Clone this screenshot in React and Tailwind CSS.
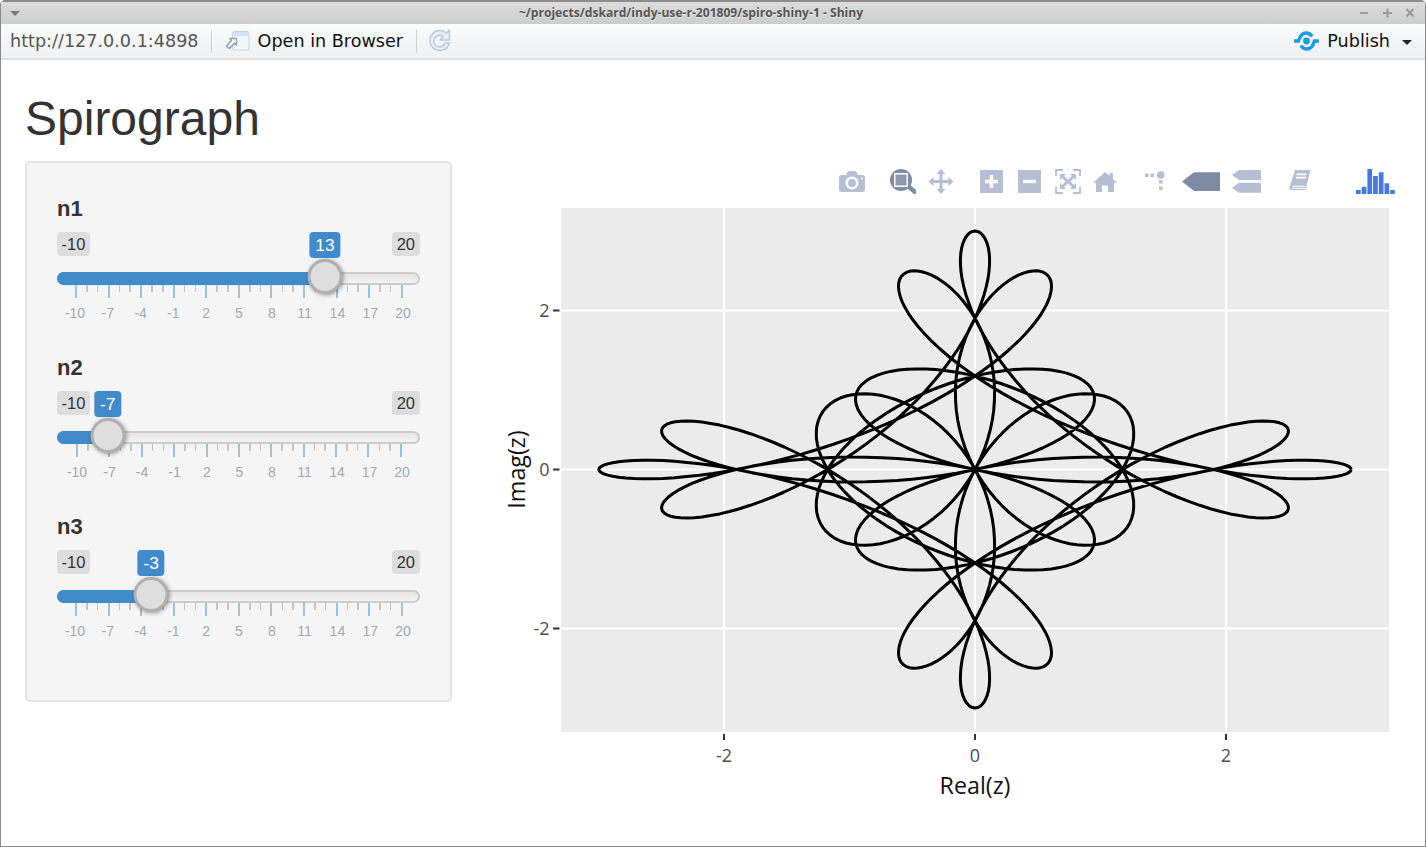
import React from 'react';

const UI = '"DejaVu Sans", sans-serif';

// z(t) = e^(i n1 t) + e^(i n2 t) + e^(i n3 t)
const spiroPath = () => {
    const pts = [];
    const N = 1000;
    for (let i = 0; i <= N; i++) {
        const t = (i / N) * 2 * Math.PI;
        const re = Math.cos(13 * t) + Math.cos(-7 * t) + Math.cos(-3 * t);
        const im = Math.sin(13 * t) + Math.sin(-7 * t) + Math.sin(-3 * t);
        pts.push(`${(975 + re * 125.4).toFixed(1)},${(469.5 - im * 79.5).toFixed(1)}`);
    }
    return 'M' + pts.join('L');
};

const tickLabels = ['-10', '-7', '-4', '-1', '2', '5', '8', '11', '14', '17', '20'];

const SliderInput = ({ label, value, tickLeft = 18, tickRight = 17, labelShift = 0 }) => {
    const p = (value + 10) / 30;
    const center = 18 + 326 * p;
    const ticks = Array.from({ length: 31 }, (_, i) => i);

    return (
        <div className="h-[159px]">
            <div className="h-[24px] pt-[1px] text-[22px] leading-[24px] font-bold text-[#333]">{label}</div>
            <div className="relative mt-[12px] w-[363px]">
                <div className="flex justify-between text-[16.5px] leading-[25px] text-[#333]">
                    <span className="h-[24px] rounded-[4px] bg-[#dddddd] px-[4.5px]">-10</span>
                    <span className="h-[24px] rounded-[4px] bg-[#dddddd] px-[5px]">20</span>
                </div>
                <div className="relative mt-[16px] h-[13px] rounded-full border-2 border-[#cccccc] bg-gradient-to-b from-[#e4e4e4] to-[#f4f4f4]" />
                <div
                    className="absolute left-0 top-[40px] h-[13px] rounded-l-full bg-[#428bca]"
                    style={{ width: center }}
                />
                <span
                    className="absolute top-0 h-[26px] -translate-x-1/2 rounded-[4px] bg-[#428bca] px-[6px] text-[17.3px] leading-[26px] text-white"
                    style={{ left: center }}
                >
                    {value}
                </span>
                <div
                    className="absolute top-[27px] h-[35px] w-[35px] -translate-x-1/2 rounded-full border-[3px] border-[#b0b0b0] bg-[#dedede] shadow-[1px_1px_4px_rgba(0,0,0,0.4)]"
                    style={{ left: center }}
                />
                <div className="flex justify-between" style={{ marginLeft: tickLeft, marginRight: tickRight }}>
                    {ticks.map((i) => (
                        <span
                            key={i}
                            className={i % 3 === 0 ? 'h-[13px] w-[2px] bg-[#9cc0df]' : 'h-[7px] w-[1.5px] bg-[#c4c4c4]'}
                        />
                    ))}
                </div>
                <div
                    className="mt-[7px] flex justify-between text-[14px] leading-[16px] text-[#a0a8b0]"
                    style={{ marginLeft: tickLeft + labelShift, marginRight: tickRight }}
                >
                    {tickLabels.map((t) => (
                        <span key={t} className="flex w-0 justify-center">{t}</span>
                    ))}
                </div>
            </div>
        </div>
    );
};

const BrowserIcon = () => (
    <svg width="26" height="22" viewBox="0 0 26 22" className="block">
        <rect x="8.5" y="1.5" width="16.500" height="18.500" rx="2" fill="#f1f6fb" stroke="#c4d3e4" />
        <rect x="9" y="2" width="15.500" height="4" rx="1.500" fill="#d3e3f3" />
        <path
            d="M6 8.500h6.500V15l-2-2-5 5.500-3-2.500 5-5.500z"
            fill="#fff"
            stroke="#8f9ba8"
            strokeWidth="1.400"
            strokeLinejoin="round"
        />
    </svg>
);

const RefreshIcon = () => (
    <svg width="24" height="24" viewBox="0 0 24 24" className="block">
        <path
            d="M21.500 14a10 10 0 1 1-3-10L21.500 1v10h-9.500l3.300-3.400a5.800 5.800 0 1 0 1.900 6.400z"
            fill="#e6eef7"
            stroke="#b8c9dc"
            strokeWidth="1.400"
            strokeLinejoin="round"
        />
    </svg>
);

const PublishIcon = () => (
    <svg width="27" height="22" viewBox="0 0 27 22" className="block">
        <path d="M1 11h4.500C7 6 10 3 13 3c3 0 5 1.500 6 3.500" fill="none" stroke="#1a9be6" strokeWidth="3.400" />
        <path d="M26 11h-4.500C20 16 17 19 14 19c-3 0-5-1.500-6-3.500" fill="none" stroke="#1a9be6" strokeWidth="3.400" />
        <circle cx="13.500" cy="11" r="3.400" fill="#1a9be6" />
    </svg>
);

const idle = '#b5bed3';
const active = '#7f8ba5';

// plotly modebar
const ModeIcon = ({ w, ml, children }) => (
    <svg width={w} height="25" viewBox={`0 0 ${w} 25`} className="block shrink-0" style={{ marginLeft: ml }}>
        {children}
    </svg>
);

const Modebar = () => (
    <div className="flex h-[25px] w-[895px] justify-end">
        <ModeIcon w={26} ml={0}>
            <path
                d="M3 6h4l2-3.500a1 1 0 0 1 1-.5h6a1 1 0 0 1 1 .5L19 6h4a3 3 0 0 1 3 3v11a3 3 0 0 1-3 3H3a3 3 0 0 1-3-3V9a3 3 0 0 1 3-3z"
                fill={idle}
            />
            <circle cx="13" cy="14" r="6.500" fill="#fff" />
            <circle cx="13" cy="14" r="4" fill={idle} />
            <circle cx="23" cy="9.500" r="1" fill="#fff" />
        </ModeIcon>
        <ModeIcon w={26} ml={25}>
            <path d="M18 17l7 6" stroke={active} strokeWidth="4.500" strokeLinecap="round" />
            <circle cx="11" cy="11" r="11" fill={active} />
            <rect x="4" y="4" width="14" height="14" rx="1" fill="#fff" />
            <rect x="5.500" y="5.500" width="11" height="11" fill="#8e99b0" />
        </ModeIcon>
        <ModeIcon w={26} ml={12}>
            <path
                d="M13 0l4.500 5h-3v6h6V8l5 4.500-5 4.500v-3h-6v6h3L13 25l-4.500-5h3v-6h-6v3l-5-4.500 5-4.500v3h6V5h-3z"
                fill={idle}
            />
        </ModeIcon>
        <ModeIcon w={23} ml={26}>
            <rect x="0" y="1" width="23" height="23" fill={idle} />
            <path d="M9.800 6h3.400v4.800H18v3.400h-4.800V19H9.800v-4.800H5v-3.400h4.800z" fill="#fff" />
        </ModeIcon>
        <ModeIcon w={23} ml={15}>
            <rect x="0" y="1" width="23" height="23" fill={idle} />
            <rect x="5" y="10.800" width="13" height="3.400" fill="#fff" />
        </ModeIcon>
        <ModeIcon w={26} ml={14}>
            <path d="M1 7V1h7M18 1h7v6M25 18v6h-7M8 24H1v-6" fill="none" stroke={idle} strokeWidth="1.800" />
            <path
                d="M5 5h6L9 7l4 3.500L17 7l-2-2h6v6l-2-2-3.500 3.500L19 16l2-2v6h-6l2-2-4-3.500L9 18l2 2H5v-6l2 2 3.500-3.500L7 9l-2 2z"
                fill={idle}
            />
        </ModeIcon>
        <ModeIcon w={24} ml={12}>
            <path
                d="M12 3l4.500 3.800V4H20v6.200l4 3.500h-3V23h-6v-6.500H9V23H3v-9.300H0z"
                fill={idle}
            />
        </ModeIcon>
        <ModeIcon w={20} ml={28}>
            <rect x="0" y="4.500" width="3.500" height="3.500" fill={idle} />
            <rect x="5.500" y="4.500" width="3.500" height="3.500" fill={idle} />
            <circle cx="15.700" cy="6" r="3.800" fill={idle} />
            <rect x="14" y="11" width="3.500" height="3.500" fill={idle} />
            <rect x="14" y="17.500" width="3.500" height="3.500" fill={idle} />
        </ModeIcon>
        <ModeIcon w={38} ml={17}>
            <path d="M0 12.500L12 3.300h26V22H12z" fill={active} />
        </ModeIcon>
        <ModeIcon w={29} ml={12}>
            <path d="M0 6l7-5h22v10H7zM0 19l7-5.300h22v10H7z" fill={idle} />
        </ModeIcon>
        <ModeIcon w={22} ml={28}>
            <path d="M6 1h15.500L17 19a2 2 0 0 1-2 2H2.500A2 2 0 0 1 .5 18.500z" fill={idle} />
            <path d="M3.500 17.200h13M3 19.300h13" stroke="#fff" strokeWidth="1" />
            <rect x="7.500" y="4.500" width="10" height="1.700" fill="#fff" />
            <rect x="6.800" y="7.800" width="10" height="1.700" fill="#fff" />
        </ModeIcon>
        <ModeIcon w={39} ml={45}>
            {[[0, 21], [5.700, 17.700], [11.400, 0], [17.100, 7], [22.800, 3.300], [28.500, 14.300], [34.200, 21]].map(([x, y]) => (
                <rect key={x} x={x} y={y} width="4.700" height={25 - y} fill="#447adb" />
            ))}
        </ModeIcon>
    </div>
);

const PlotTicks = () => (
    <g fontFamily='"Open Sans", sans-serif' fontSize="18" fill="#4d4d4d">
        {[[-2, 724], [0, 975], [2, 1226]].map(([v, x]) => (
            <g key={v}>
                <rect x={x - 1} y="734" width="2" height="6" fill="#333" />
                <text x={x} y="762" textAnchor="middle">{v}</text>
            </g>
        ))}
        {[[2, 310.500], [0, 469.500], [-2, 628.500]].map(([v, y]) => (
            <g key={v}>
                <rect x="553" y={y - 1} width="6.500" height="2" fill="#333" />
                <text x="549.500" y={y + 6.500} textAnchor="end">{v}</text>
            </g>
        ))}
    </g>
);

const Plot = () => (
    <svg width="900" height="600" viewBox="500 208 900 600" className="mt-[14px] block">
        <rect x="561" y="208" width="828" height="524" fill="#ebebeb" />
        {[724, 975, 1226].map((x) => (
            <line key={x} x1={x} x2={x} y1="208" y2="732" stroke="#fff" strokeWidth="2" />
        ))}
        {[310.500, 469.500, 628.500].map((y) => (
            <line key={y} x1="561" x2="1389" y1={y} y2={y} stroke="#fff" strokeWidth="2" />
        ))}
        <path d={spiroPath()} fill="none" stroke="#000" strokeWidth="3" strokeLinejoin="round" />
        <PlotTicks />
        <g fontFamily='"Open Sans", sans-serif' fontSize="23.300" fill="#111">
            <text x="975" y="794" textAnchor="middle">Real(z)</text>
            <text transform="translate(525 469.500) rotate(-90)" textAnchor="middle">Imag(z)</text>
        </g>
    </svg>
);

const App = () => {
    return (
        <div className="flex h-screen w-full flex-col overflow-hidden rounded-t-[5px] border border-t-0 border-[#8a8a8a] bg-white">
            {/* barra de ventana */}
            <div
                className="relative flex h-[24px] shrink-0 items-center justify-center border-t-2 border-[#8c8c8c] bg-gradient-to-b from-[#dcdcdc] to-[#cdcdcd] text-[12.1px] font-bold text-[#555] [text-shadow:0_1px_0_rgba(255,255,255,0.5)]"
                style={{ fontFamily: '"Open Sans", sans-serif' }}
            >
                <span className="absolute left-[9px] top-[9px] h-0 w-0 border-x-[5px] border-t-[5px] border-x-transparent border-t-[#777]" />
                <span className="mr-[44px]">~/projects/dskard/indy-use-r-201809/spiro-shiny-1 - Shiny</span>
                <svg width="56" height="12" viewBox="0 0 56 12" className="absolute right-[9px] top-[5px]">
                    <path d="M0 6h8M23 6h9M27.500 1.500v9M46.500 2l7 7.500M53.500 2l-7 7.500" stroke="#9a9a9a" strokeWidth="2" fill="none" />
                </svg>
            </div>

            {/* barra de herramientas */}
            <div
                className="flex h-[36px] shrink-0 items-center border-b-2 border-[#dde0e3] bg-gradient-to-b from-[#fbfcfc] to-[#eef0f1] pl-[9px] text-[17.6px]"
                style={{ fontFamily: UI }}
            >
                <span className="text-[#555]">http://127.0.0.1:4898</span>
                <span className="ml-[12px] h-[23px] w-[1px] bg-[#cfd2d4]" />
                <span className="ml-[12px]"><BrowserIcon /></span>
                <span className="ml-[8px] text-[#111]">Open in Browser</span>
                <span className="ml-[13px] h-[23px] w-[1px] bg-[#cfd2d4]" />
                <span className="ml-[11px]"><RefreshIcon /></span>
                <span className="ml-auto"><PublishIcon /></span>
                <span className="ml-[7px] text-[#111]">Publish</span>
                <span className="ml-[12px] mr-[13px] mt-[2px] h-0 w-0 border-x-[5px] border-t-[5px] border-x-transparent border-t-[#222]" />
            </div>

            <div className="flex-1 pl-[24px]" style={{ fontFamily: '"Liberation Sans", Arial, sans-serif' }}>
                <h1 className="mt-[32px] h-[53px] text-[48px] font-normal leading-[53px] text-[#333]">Spirograph</h1>
                <div className="mt-[16px] flex items-start">
                    <div className="h-[541px] w-[427px] shrink-0 rounded-[5px] border-2 border-[#e3e3e3] bg-[#f5f5f5] pl-[30px] pt-[33px]">
                        <SliderInput label="n1" value={13} />
                        <SliderInput label="n2" value={-7} tickLeft={19} tickRight={18} labelShift={1} />
                        <SliderInput label="n3" value={-3} />
                    </div>
                    <div className="ml-[48px] pt-[8px]">
                        <Modebar />
                        <Plot />
                    </div>
                </div>
            </div>
        </div>
    );
};

export default App;
